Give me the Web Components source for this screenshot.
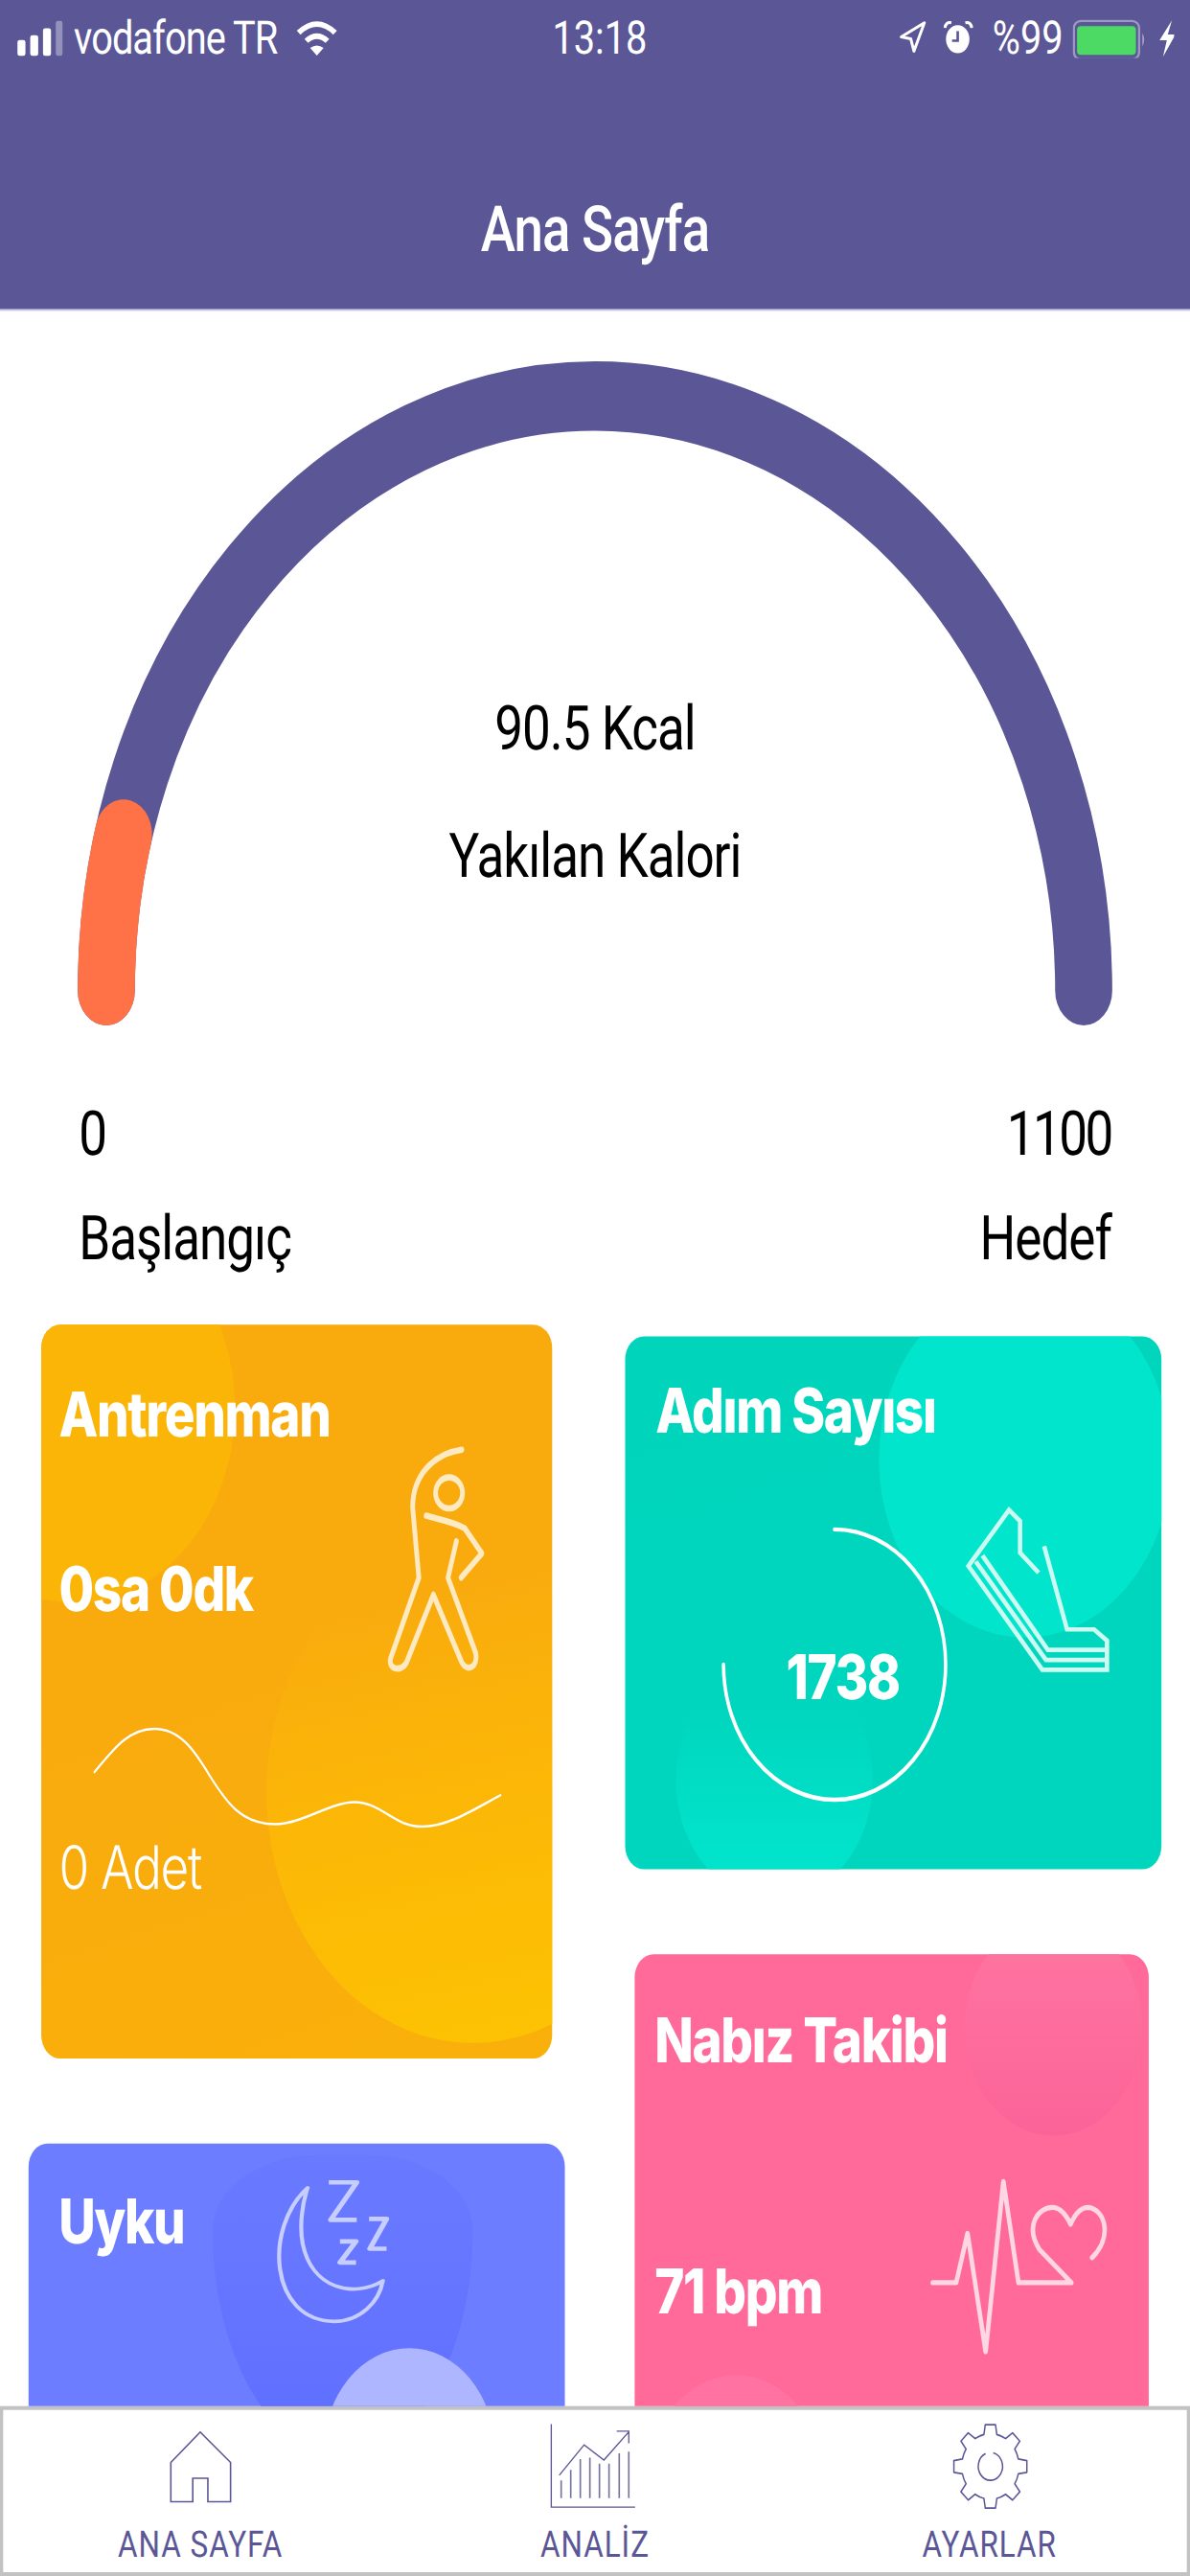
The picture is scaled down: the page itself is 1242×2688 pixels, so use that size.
<!DOCTYPE html>
<html lang="tr">
<head>
<meta charset="utf-8">
<title>Ana Sayfa</title>
<style>
  html, body { margin: 0; width: 1242px; height: 2688px; background: #fff; }
  html { overflow: hidden; }
</style>
</head>
<body>
<app-shell></app-shell>
<script>
function define(name, html) {
  const template = document.createElement("template");
  template.innerHTML = html;
  customElements.define(name, class extends HTMLElement {
    constructor() {
      super();
      this.attachShadow({ mode: "open" });
      this.shadowRoot.appendChild(template.content.cloneNode(true));
    }
  });
}

function gearPath() {
  const pt = (r, deg) => {
    const a = deg * Math.PI / 180;
    return `${(r * Math.cos(a)).toFixed(2)},${(r * Math.sin(a)).toFixed(2)}`;
  };
  let d = "";
  for (let i = 0; i < 8; i++) {
    const a = i * 45 - 90;
    d += `${i ? "A30,30 0 0 1 " : "M"}${pt(30, a - 13)} L${pt(38.5, a - 8)} L${pt(38.5, a + 8)} L${pt(30, a + 13)} `;
  }
  return d + "A30,30 0 0 1 " + pt(30, -103) + " Z";
}

define("status-bar", `
  <style>
    :host { display: grid; grid-template-columns: 1fr auto 1fr; align-items: center; height: 20px; color: #fff; font-size: 12px; }
    .left, .right { display: flex; align-items: center; }
    .left { padding-left: 5px; gap: 3.2px; }
    .left span { letter-spacing: -.28px; }
    .right { justify-content: flex-end; padding-right: 4.6px; }
    svg { display: block; flex: none; }
    .time { padding-left: 3px; }
  </style>
  <div class="left">
    <svg width="15.1" height="9.9" viewBox="50 50 150 120" preserveAspectRatio="none" fill="#fff">
      <rect x="55" y="115" width="25" height="50" rx="7"/>
      <rect x="95" y="100" width="25" height="65" rx="7"/>
      <rect x="135" y="78" width="25" height="87" rx="7"/>
      <rect x="175" y="55" width="21" height="110" rx="7" opacity=".35"/>
    </svg>
    <span>vodafone TR</span>
    <svg style="margin-left:2.8px" width="13.6" height="9.9" viewBox="915 50 135 120" preserveAspectRatio="none">
      <path d="M926,92 Q983,38 1040,92 M950,118 Q983,88 1016,118" fill="none" stroke="#fff" stroke-width="17"/>
      <path d="M962,140 Q983,124 1004,140 L983,164 Z" fill="#fff"/>
    </svg>
  </div>
  <div class="time">13:18</div>
  <div class="right">
    <svg width="9" height="9.1" viewBox="55 55 90 110" preserveAspectRatio="none">
      <path d="M65,110 L138,66 L105,155 L95,116 Z" fill="none" stroke="#fff" stroke-width="9" stroke-linejoin="round"/>
    </svg>
    <svg style="margin-left:5.6px" width="10" height="9.1" viewBox="200 55 100 110" preserveAspectRatio="none">
      <ellipse cx="248" cy="117" rx="37" ry="44" fill="#fff"/>
      <path d="M208,82 Q210,62 228,66 M272,66 Q290,62 292,82" fill="none" stroke="#fff" stroke-width="9"/>
      <path d="M248,92 V122 H230" fill="none" stroke="#5b5797" stroke-width="8"/>
    </svg>
    <span style="margin-left:5.3px">%99</span>
    <svg style="margin-left:3.4px" width="23.4" height="10.8" viewBox="608 45 232 130" preserveAspectRatio="none">
      <rect x="612" y="50" width="204" height="120" rx="22" fill="none" stroke="#fff" stroke-opacity=".4" stroke-width="7"/>
      <rect x="622" y="66" width="184" height="90" rx="12" fill="#4cd964"/>
      <path d="M826,88 Q838,108 826,130 Z" fill="#fff" fill-opacity=".45"/>
    </svg>
    <svg style="margin-left:3px" width="5.6" height="9.9" viewBox="865 52 56 120" preserveAspectRatio="none">
      <path d="M908,55 L869,118 H892 L880,170 L919,100 H895 Z" fill="#fff"/>
    </svg>
  </div>
`);

define("nav-header", `
  <style>
    :host { display: block; flex: none; height: 80px; background: #5b5797; box-shadow: 0 .5px 0 #c9c8ea; position: relative; }
    h1 { margin: 0; height: 40px; padding-top: .3px; display: flex; align-items: center; justify-content: center; color: #fff; font-size: 16.5px; font-weight: 500; letter-spacing: -.3px; }
    .gap { height: 20px; }
  </style>
  <status-bar></status-bar>
  <div class="gap"></div>
  <h1><slot></slot></h1>
`);

define("calorie-gauge", `
  <style>
    :host { display: block; color: #000; font-size: 16px; line-height: 20px; letter-spacing: -.3px; }
    .dial { display: grid; }
    .dial > * { grid-area: 1 / 1; }
    svg { display: block; }
    .center { display: flex; flex-direction: column; align-items: center; gap: 12.7px; padding-top: 99px; }
    .ends { display: flex; justify-content: space-between; padding: 0 24.8px; margin-top: 14px; }
    .ends + .ends { margin-top: 7px; }
    .goal { letter-spacing: -.75px; }
  </style>
  <div class="dial">
    <svg width="375" height="190" viewBox="0 0 375 190">
      <path d="M33.5,176.5 A154,154 0 0 1 341.5,176.5" fill="none" stroke="#5b5797" stroke-width="18" stroke-linecap="round"/>
      <path d="M33.5,176.5 A154,154 0 0 1 38.9,136" fill="none" stroke="#ff7247" stroke-width="18" stroke-linecap="round"/>
    </svg>
    <div class="center"><span>90.5 Kcal</span><span>Yakılan Kalori</span></div>
  </div>
  <div class="ends"><span>0</span><span class="goal">1100</span></div>
  <div class="ends"><span>Başlangıç</span><span>Hedef</span></div>
`);

define("metric-card", `
  <style>
    :host { display: block; height: 100%; position: relative; overflow: hidden; border-radius: 6px; color: #fff; font-family: Inter, "Liberation Sans", sans-serif; }
    .bg { position: absolute; inset: 0; }
    .content { position: relative; }
  </style>
  <div class="bg"><slot name="bg"></slot></div>
  <div class="content"><slot></slot></div>
`);

const cardStyle = `
  .title, .value { font-size: 16px; line-height: 20px; font-weight: 800; letter-spacing: -.4px; }
  .blob { position: absolute; border-radius: 50%; }
  svg { display: block; flex: none; }
  .row { display: flex; align-items: center; justify-content: space-between; }
`;

define("workout-card", `
  <style>
    ${cardStyle}
    :host { display: block; width: 161.3px; height: 190.4px; margin: .4px 0 0 13.2px; }
    metric-card { background: linear-gradient(165deg, #f9ab0e 45%, #f9ad0c 70%, #fab00a); }
    .b1 { left: -40px; top: -29px; width: 101px; height: 101px; background: #fbb507; }
    .b2 { left: 71px; top: 56px; width: 130px; height: 130px; background: linear-gradient(170deg, rgba(252,183,6,0) 15%, #fcb806 55%, #fdc402 100%); }
    .title { padding: 13px 5.4px 0; }
    .row { padding: 0 21.7px 0 5.4px; margin-top: -1.5px; }
    .row .value { margin-top: 15px; }
    .wave { margin: 13.7px 0 .8px 16px; }
    .count { padding-left: 5.4px; font-size: 15.5px; line-height: 20px; font-weight: 300; letter-spacing: -.4px; }
  </style>
  <metric-card>
    <div slot="bg" class="blob b1"></div>
    <div slot="bg" class="blob b2"></div>
    <div class="title">Antrenman</div>
    <div class="row">
      <span class="value">0sa 0dk</span>
      <svg width="31" height="59" viewBox="1005 285 270 470" preserveAspectRatio="none" fill="none" stroke="#fdeac3" stroke-width="13" stroke-linecap="round" stroke-linejoin="round">
        <ellipse cx="1175" cy="385" rx="37" ry="32"/>
        <path d="M1210,296 C1130,305 1075,350 1075,415 L1092,560 L1015,725 C1005,750 1045,755 1058,735 L1132,595 L1210,735 C1225,755 1255,745 1248,715 L1172,560 L1195,485"/>
        <path d="M1112,432 C1150,440 1190,445 1218,458 L1265,510 L1208,560"/>
      </svg>
    </div>
    <svg class="wave" width="129.5" height="26.6" viewBox="200 860 1120 210" preserveAspectRatio="none" fill="none" stroke="#fff" stroke-width="5">
      <path d="M205,955 C260,905 300,865 370,865 C440,865 480,910 520,960 C570,1020 610,1060 700,1060 C770,1060 850,1015 915,1015 C990,1015 1020,1065 1100,1065 C1170,1065 1240,1030 1315,1000"/>
    </svg>
    <div class="count">0 Adet</div>
  </metric-card>
`);

define("steps-card", `
  <style>
    ${cardStyle}
    :host { display: block; width: 169.4px; height: 138px; margin: 4px 0 0 9.1px; }
    metric-card { background: linear-gradient(170deg, #00d5bc, #00d6be); }
    .b1 { left: 80px; top: -14px; width: 92px; height: 92px; background: #02e5cd; }
    .b2 { left: 16px; top: 84px; width: 62px; height: 62px; background: linear-gradient(to bottom, rgba(2,229,205,0) 20%, #02e3cb 80%); }
    .title { padding: 9px 10px 0; }
    .row { justify-content: flex-start; margin-top: 3.5px; }
    .ring { display: grid; margin: 16.5px 0 0 30px; place-items: center; }
    .ring > * { grid-area: 1 / 1; }
    .ring span { padding: 5px 0 0 6px; }
    .shoe { margin: -23px 0 0 5.5px; }
  </style>
  <metric-card>
    <div slot="bg" class="blob b1"></div>
    <div slot="bg" class="blob b2"></div>
    <div class="title">Adım Sayısı</div>
    <div class="row">
      <div class="ring">
        <svg width="72" height="72" viewBox="-36 -36 72 72" fill="none" stroke="#fff" stroke-width="1.1" stroke-linecap="round">
          <path d="M0,-35 A35,35 0 1 1 -35,0"/>
        </svg>
        <span class="value">1738</span>
      </div>
      <svg class="shoe" width="46" height="43.5" viewBox="955 500 395 450" preserveAspectRatio="none" fill="none" stroke="#ccfbf2" stroke-width="12">
        <path d="M1155,678 L1105,625 V540 L1075,510 L965,660 L1165,938 H1340 V860 L1305,830 H1232 L1170,607"/>
        <path d="M1003,632 L1180,885 H1335 M985,648 L1175,912 H1340"/>
      </svg>
    </div>
  </metric-card>
`);

define("sleep-card", `
  <style>
    ${cardStyle}
    :host { display: block; width: 169.4px; height: 120px; margin: 21.5px 0 0 9px; }
    metric-card { background: #6d7dff; }
    .b1 { left: 58px; top: 3px; width: 82px; height: 78px; border-radius: 40% 40% 50% 50% / 25% 25% 75% 75%; background: linear-gradient(to bottom, #6a7aff, #5f6fff); }
    .b2 { left: 93px; top: 53px; width: 54px; height: 54px; background: #aeb6ff; }
    .row { justify-content: flex-start; align-items: flex-start; padding: 9.5px 0 0 9.5px; }
    .title { margin-top: 1px; }
    .moon { margin-left: 28px; }
  </style>
  <metric-card>
    <div slot="bg" class="blob b1"></div>
    <div slot="bg" class="blob b2"></div>
    <div class="row">
      <span class="title">Uyku</span>
      <svg class="moon" width="37" height="38" viewBox="745 215 315 458" preserveAspectRatio="none" fill="none" stroke="#c6cdff" stroke-width="11" stroke-linejoin="round">
        <path d="M838,245 C720,370 735,660 910,662 C980,662 1030,600 1040,535 C960,590 850,560 825,420 C815,360 825,290 838,245 Z"/>
        <path stroke-width="14" d="M895,228 H970 L900,345 H970 M1003,342 H1050 L1005,435 H1050 M925,412 H968 L925,478 H968"/>
      </svg>
    </div>
  </metric-card>
`);

define("pulse-card", `
  <style>
    ${cardStyle}
    :host { display: block; width: 162.4px; height: 130px; margin: 21.7px 0 0 12.4px; }
    metric-card { background: #ff6a9b; }
    .b1 { left: 104px; top: -9px; width: 56px; height: 56px; background: linear-gradient(to bottom, #ff76a2, #fb6398); }
    .b2 { left: 4px; top: 109px; width: 56px; height: 56px; background: #ff72a1; }
    .title { padding: 12px 6.4px 0; }
    .row { padding: 0 12.5px 0 6.4px; margin-top: 26px; }
    .row .value { margin-top: 12px; }
  </style>
  <metric-card>
    <div slot="bg" class="blob b1"></div>
    <div slot="bg" class="blob b2"></div>
    <div class="title">Nabız Takibi</div>
    <div class="row">
      <span class="value">71 bpm</span>
      <svg width="56.5" height="46" viewBox="880 630 475 425" preserveAspectRatio="none" fill="none" stroke="#ffd6e4" stroke-width="12" stroke-linecap="round" stroke-linejoin="round">
        <path d="M888,880 H950 L980,762 L1028,1045 L1075,638 L1115,880 H1255 L1170,800 C1130,740 1170,700 1205,700 C1230,700 1245,725 1253,740 C1265,715 1280,700 1300,700 C1345,705 1365,770 1310,820"/>
      </svg>
    </div>
  </metric-card>
`);

define("tab-item", `
  <style>
    :host { display: flex; flex-direction: column; align-items: center; flex: 1; color: #5b5797; font-size: 9.5px; line-height: 12px; font-weight: 400; letter-spacing: .3px; }
    ::slotted(svg) { display: block; margin-top: .7px; }
    .label { margin-top: 1.4px; }
  </style>
  <slot name="icon"></slot>
  <span class="label"><slot></slot></span>
`);

define("tab-bar", `
  <style>
    :host { display: flex; flex: none; height: 44.4px; box-sizing: border-box; background: #fff; border: .8px solid #c2c2c2; }
  </style>
  <tab-item>
    <svg slot="icon" width="36.2" height="29.8" viewBox="0 0 120 120" preserveAspectRatio="none" fill="none" stroke="#5b5797" stroke-width="1.6">
      <path d="M60,24.3 L91.7,57.7 V100.7 H68 V75 H52.2 V100.7 H29.3 V57.7 Z"/>
    </svg>
    ANA SAYFA
  </tab-item>
  <tab-item>
    <svg slot="icon" width="36.2" height="29.8" viewBox="0 0 360 360" preserveAspectRatio="none" fill="none">
      <path d="M47,47 V320 H310 M72,215 L150,115 L212,165 L290,72 M252,70 H290 V110" stroke="#5b5797" stroke-width="4"/>
      <path d="M78,232 V290 M108,197 V290 M138,162 V290 M168,157 V290 M198,177 V290 M228,177 V290 M260,143 V290 M290,137 V290" stroke="#77749f" stroke-width="5"/>
    </svg>
    ANALİZ
  </tab-item>
  <tab-item>
    <svg slot="icon" width="36.2" height="29.8" viewBox="0 0 120 120" preserveAspectRatio="none" fill="none" stroke="#5b5797" stroke-width="1.5">
      <g transform="translate(60 62) scale(1 1.2)">
        <path d="${gearPath()}" stroke-linejoin="round"/>
        <path d="M3,-12.4 A12.7,12.7 0 1 1 -5,-11.7"/>
      </g>
    </svg>
    AYARLAR
  </tab-item>
`);

define("app-shell", `
  <style>
    :host {
      display: flex; flex-direction: column; width: 375px; height: 667px;
      transform: scale(3.312, 4.03); transform-origin: 0 0;
      font-family: Roboto, "Liberation Sans", sans-serif; text-rendering: geometricPrecision;
      background: #fff;
    }
    main { flex: 1; min-height: 0; overflow: hidden; }
    .cards { display: flex; margin-top: 11.4px; }
    .column { width: 187.5px; flex: none; }
  </style>
  <nav-header>Ana Sayfa</nav-header>
  <main>
    <calorie-gauge></calorie-gauge>
    <div class="cards">
      <div class="column">
        <workout-card></workout-card>
        <sleep-card></sleep-card>
      </div>
      <div class="column">
        <steps-card></steps-card>
        <pulse-card></pulse-card>
      </div>
    </div>
  </main>
  <tab-bar></tab-bar>
`);
</script>
</body>
</html>
